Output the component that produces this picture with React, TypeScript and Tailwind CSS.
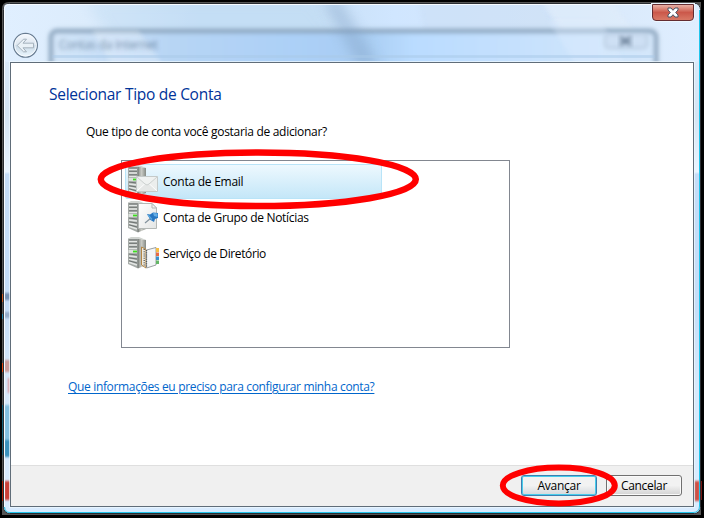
import React from 'react';

const SANS = "font-['Open_Sans','Noto_Sans',sans-serif]";

function Glass() {
  return (
    <svg className="pointer-events-none absolute inset-0" width="704" height="518" viewBox="0 0 704 518">
      <defs>
        <linearGradient id="sky" x1="0" x2="1">
          <stop offset="0" stopColor="#e0efff" />
          <stop offset=".12" stopColor="#dcecfc" />
          <stop offset=".28" stopColor="#c8e0f8" />
          <stop offset=".45" stopColor="#c8e0f6" />
          <stop offset=".56" stopColor="#d0e6ff" />
          <stop offset=".82" stopColor="#d8e8fa" />
          <stop offset="1" stopColor="#dfeeff" />
        </linearGradient>
        <linearGradient id="pane" x1="0" x2="1">
          <stop offset="0" stopColor="#d4e6f9" />
          <stop offset=".2" stopColor="#b7d5f4" />
          <stop offset=".4" stopColor="#acd0f7" />
          <stop offset=".52" stopColor="#a9cdf2" />
          <stop offset=".6" stopColor="#badcff" />
          <stop offset="1" stopColor="#d5e7fb" />
        </linearGradient>
        <linearGradient id="left" x1="0" y1="0" x2="0" y2="1">
          <stop offset="0" stopColor="#e0efff" />
          <stop offset=".22" stopColor="#d4e4f3" />
          <stop offset=".33" stopColor="#e9f4ff" />
          <stop offset=".335" stopColor="#c4dcf7" />
          <stop offset=".6" stopColor="#c6def8" />
          <stop offset=".75" stopColor="#d7e9fb" />
          <stop offset="1" stopColor="#d8ebff" />
        </linearGradient>
        <filter id="soft1" x="-40%" y="-20%" width="180%" height="140%"><feGaussianBlur stdDeviation="1" /></filter>
        <filter id="soft2" x="-20%" y="-40%" width="140%" height="180%"><feGaussianBlur stdDeviation="2.2" /></filter>
        <filter id="soft4" x="-50%" y="-30%" width="200%" height="160%"><feGaussianBlur stdDeviation="6" /></filter>
        <clipPath id="frame"><rect x="4" y="4" width="696" height="509" rx="5" /></clipPath>
        <clipPath id="caption"><rect x="4" y="4" width="695" height="58" rx="4" /></clipPath>
      </defs>
      <path d="M2 515V9Q2 2 9 2H701V515Z" fill="#555" />
      <g>
        <rect x="2" y="294" width="2" height="8" fill="#c75a25" />
        <rect x="2" y="314" width="2" height="5" fill="#2688ae" />
        <rect x="2" y="363" width="2" height="9" fill="#e34912" />
        <rect x="2" y="405" width="2" height="50" fill="#17617a" />
        <rect x="2" y="481" width="2" height="20" fill="#b22109" />
        <rect x="701" y="481" width="1" height="19" fill="#751610" />
      </g>
      <rect x="3.5" y="3.5" width="697" height="510" rx="6" fill="url(#left)" stroke="#292d32" />
      <g clipPath="url(#caption)">
        <rect x="4" y="4" width="696" height="59" fill="url(#sky)" />
        <path d="M85 0H310L363 65H130Z" fill="#bcd9f0" opacity=".35" filter="url(#soft4)" />
        <path d="M418 0H540L585 65H430Z" fill="#cbdff6" opacity=".6" filter="url(#soft2)" />
        <path d="M542 0H610L660 66H584Z" fill="#e1edf9" opacity=".55" filter="url(#soft2)" />
        <rect x="51" y="31" width="605" height="62" rx="6" fill="url(#pane)" stroke="#8ba5be" strokeWidth="4.5" filter="url(#soft2)" />
        <path d="M92 30H138L164 66H112Z" fill="#f5f9fd" opacity=".3" filter="url(#soft2)" />
        <path d="M322 0H340L380 66H358Z" fill="#7f9fc2" opacity=".38" filter="url(#soft4)" />
        <path d="M548 20H600L627 66H576Z" fill="#e0eeff" opacity=".35" filter="url(#soft2)" />
        <path d="M54 56V57H653V56Z" stroke="#a9c9e7" strokeWidth="3" opacity=".6" filter="url(#soft1)" />
        <text x="59" y="49" fontFamily="Open Sans" fontSize="12" textLength="99" fill="#506c89" opacity=".75" filter="url(#soft2)">Contas da Internet</text>
        <rect x="605" y="34" width="42" height="14" rx="3" fill="#cee0f4" stroke="#95aac0" filter="url(#soft2)" />
        <path d="M620 37L631 45M631 37L620 45" stroke="#6b8199" strokeWidth="3" filter="url(#soft2)" />
      </g>
      <g clipPath="url(#frame)">
        <rect x="4" y="293" width="7" height="7" fill="#7692b5" filter="url(#soft1)" />
        <rect x="4" y="312" width="7" height="6" fill="#96adca" filter="url(#soft1)" />
        <rect x="4" y="360" width="7" height="12" fill="#cc9d9b" filter="url(#soft1)" />
        <rect x="8" y="378" width="4" height="15" fill="#db969b" filter="url(#soft1)" />
        <path d="M4 405H11V455H4Z" fill="#83bfe0" filter="url(#soft1)" />
        <path d="M4 440H11V457H4Z" fill="#3b91bc" filter="url(#soft1)" />
        <rect x="4" y="481" width="7" height="19" fill="#cc4037" filter="url(#soft1)" />
        <rect x="694" y="481" width="6" height="20" fill="#ce5145" filter="url(#soft1)" />
      </g>
      <path d="M4.5 507V10Q4.5 4.5 10 4.5H694" stroke="#f7fbff" fill="none" />
      <path d="M699.5 10V506Q699.5 512.5 693 512.5H10Q5 512.5 4.5 507" stroke="#20c5ec" fill="none" />
    </svg>
  );
}

function BackArrow() {
  return (
    <svg className="mt-[32px] ml-[12px] h-[27px] w-[27px] shrink-0" viewBox="0 0 27 27">
      <defs><linearGradient id="orb" x2="0" y2="1"><stop stopColor="#f7faff" /><stop offset=".48" stopColor="#dce6ef" /><stop offset=".52" stopColor="#cbdbe8" /><stop offset="1" stopColor="#edf8ff" /></linearGradient></defs>
      <circle cx="13.5" cy="13.3" r="11.9" fill="url(#orb)" stroke="#687c91" strokeWidth="1.2" />
      <circle cx="13.5" cy="13.3" r="10.8" fill="none" stroke="#f6faff" />
      <path d="M5.2 13.5L11.5 7.2H14.5L11 11.2H21.5V15.8H11L14.5 19.8H11.5Z" fill="#e9f1f7" stroke="#a6b2bd" />
    </svg>
  );
}

function Server() {
  return <>
    <path d="M11 1.5L19 3V28L11 31.5Z" fill="url(#metal)" />
    <path d="M1 1.5H11V31.5L1 27Z" fill="#a5aaa7" />
    <path d="M2 4.5H10M2 8H10M2 11.5H10M2 19L10 20M2 22.2L10 24M2 25.2L10 28" stroke="#e3e6e4" strokeWidth="1.6" />
    <path d="M2 3H10M2 6.3H10M2 9.8H10M2 17L10 18M2 20.8L10 22M2 23.8L10 26" stroke="#6e7472" />
    <path d="M1.5 13H10V16.2H1.5Z" fill="#dce1dc" />
    <path d="M6 13.6H10V15.4H6Z" fill="#3ddd20" />
    <path d="M1 1.5H11L19 3L12 0H4Z" fill="#d0d4d0" />
    <path d="M11 2V31" stroke="#6e7370" strokeWidth=".8" />
  </>;
}

function AccountIcon({ kind }: { kind: string }) {
  return (
    <svg className="h-8 w-8 shrink-0" viewBox="0 0 32 32">
      <defs>
        <linearGradient id="metal"><stop stopColor="#8d918d" /><stop offset=".45" stopColor="#c9cbc5" /><stop offset="1" stopColor="#858a84" /></linearGradient>
        <linearGradient id="paper" x2="1" y2="1"><stop stopColor="#fff" /><stop offset="1" stopColor="#e3e5e4" /></linearGradient>
      </defs>
      <Server />
      {kind === 'mail' && <>
        <path d="M9.5 11.5H30.5V26.5H9.5Z" fill="#eceeed" stroke="#c5cac9" />
        <path d="M10 26L18 18.5H22L30 26" fill="#e5e7e6" stroke="#fff" />
        <path d="M10 12L18 19Q20 21 22 19L30 12" fill="#f0f2f1" stroke="#c3c8c6" strokeWidth=".8" />
      </>}
      {kind === 'news' && <>
        <path d="M11.5 2.5H25L29.5 7V27.5H11.5Z" fill="url(#paper)" stroke="#b4b8b6" />
        <path d="M25 2.5V7H29.5Z" fill="#f5f5f5" stroke="#b4b7b5" />
        <path d="M18 22L24 17" stroke="#82919c" strokeWidth="1.2" />
        <path d="M20 13L23 13.5L26 11.5L31 12V17L28 18L27 21L23.5 19Z" fill="#2877c2" />
        <path d="M26 12L30.5 12.5V16L27 15Z" fill="#64aee6" />
        <path d="M21 14L25 18.5" stroke="#5ca8df" strokeWidth="1.2" />
      </>}
      {kind === 'directory' && <>
        <path d="M14.5 10L19 12.5V31L14.5 28Z" fill="#eee9dc" stroke="#b38645" />
        <path d="M19.5 13L29 10.5V28L19.5 31Z" fill="#f3f6f8" stroke="#9a9fa1" />
        <path d="M17.2 12V29M19.5 13V30" stroke="#51585b" strokeDasharray="1 1.2" strokeWidth="1.3" />
        <path d="M29 11H32V15H29Z" fill="#f4bd44" /><path d="M29 15.5H32V19H29Z" fill="#e66a43" /><path d="M29 19.5H32V23H29Z" fill="#3991cd" /><path d="M29 23.5H32V27H29Z" fill="#63b666" />
      </>}
    </svg>
  );
}

function Account({ kind, label, tracking, selected = false }: { kind: string; label: string; tracking: string; selected?: boolean }) {
  return (
    <button className={`flex h-[35px] w-[257px] items-start gap-1 rounded-[2px] border pl-[1px] text-left ${selected ? 'border-[#b9e4f8] bg-linear-to-b from-[#edf8fe] to-[#c4e7f8]' : 'border-transparent'}`}>
      <AccountIcon kind={kind} />
      <span className={`leading-[34px] whitespace-nowrap ${tracking}`}>{label}</span>
    </button>
  );
}

function CloseButton() {
  return (
    <button aria-label="Fechar" className="mt-[4px] mr-[10px] flex h-[17px] w-[42px] items-center justify-center rounded-b-[4px] border border-[#632c31] bg-linear-to-b from-[#e8b0a5] via-[#cb584a] to-[#d87865] shadow-[0_0_0_1px_#edf7ff]">
      <svg width="12" height="11" viewBox="0 0 12 11"><path d="M1 1H4L6 3.3L8 1H11V3L8.7 5.5L11 8V10H8L6 7.7L4 10H1V8L3.3 5.5L1 3Z" fill="#fff" stroke="#485465" /></svg>
    </button>
  );
}

export default function App() {
  return (
    <main className={`relative h-[518px] w-[704px] overflow-hidden bg-black text-[12px] leading-4 text-black ${SANS}`}>
      <Glass />
      <div className="relative flex h-full flex-col">
        <header className="flex h-[62px] items-start justify-between">
          <BackArrow />
          <CloseButton />
        </header>
        <section className="mx-[10px] flex h-[445px] w-[684px] flex-col border border-[#606d79] bg-white shadow-[0_0_0_1px_rgba(240,250,255,.7)]">
          <div className="flex flex-1 flex-col items-start">
            <h1 className="mt-[19px] ml-[38px] text-[15.5px] leading-6 tracking-[-0.28px] whitespace-nowrap text-[#003399]">Selecionar Tipo de Conta</h1>
            <p className="mt-[18px] ml-[75px] tracking-[-0.3px] whitespace-nowrap">Que tipo de conta você gostaria de adicionar?</p>
            <div className="mt-[20px] ml-[110px] flex h-[188px] w-[389px] flex-col gap-px border border-[#828790] pt-[3px] pl-[3px]">
              <Account kind="mail" label="Conta de Email" tracking="tracking-[-0.25px]" selected />
              <Account kind="news" label="Conta de Grupo de Notícias" tracking="tracking-[-0.32px]" />
              <Account kind="directory" label="Serviço de Diretório" tracking="tracking-[-0.38px]" />
            </div>
            <a className="mt-[31px] ml-[57px] tracking-[-0.34px] whitespace-nowrap text-[#0066cc] underline underline-offset-2" href="#">Que informações eu preciso para configurar minha conta?</a>
          </div>
          <footer className="flex h-[41px] shrink-0 items-start justify-end gap-[9px] border-t border-[#dfdfdf] bg-[#f0f0f0] pt-[9px] pr-[11px]">
            <button className="flex h-[21px] w-[76px] items-center justify-center rounded-[3px] border border-[#3c7fb1] bg-linear-to-b from-[#f2f2f2] from-50% to-[#d3d8dc] tracking-[-0.25px] shadow-[inset_0_0_0_1px_#48cceb]">Avançar</button>
            <button className="flex h-[21px] w-[76px] items-center justify-center rounded-[3px] border border-[#707070] bg-linear-to-b from-[#f2f2f2] from-50% to-[#d2d2d2] tracking-[-0.35px] shadow-[inset_0_0_0_1px_#fafafa]">Cancelar</button>
          </footer>
        </section>
      </div>
      <svg className="pointer-events-none absolute inset-0" width="704" height="518" viewBox="0 0 704 518" fill="none" stroke="red">
        <ellipse cx="258.3" cy="179.3" rx="157.5" ry="26.7" strokeWidth="6.5" />
        <ellipse cx="558.8" cy="485.5" rx="56" ry="18" strokeWidth="6" />
      </svg>
    </main>
  );
}
